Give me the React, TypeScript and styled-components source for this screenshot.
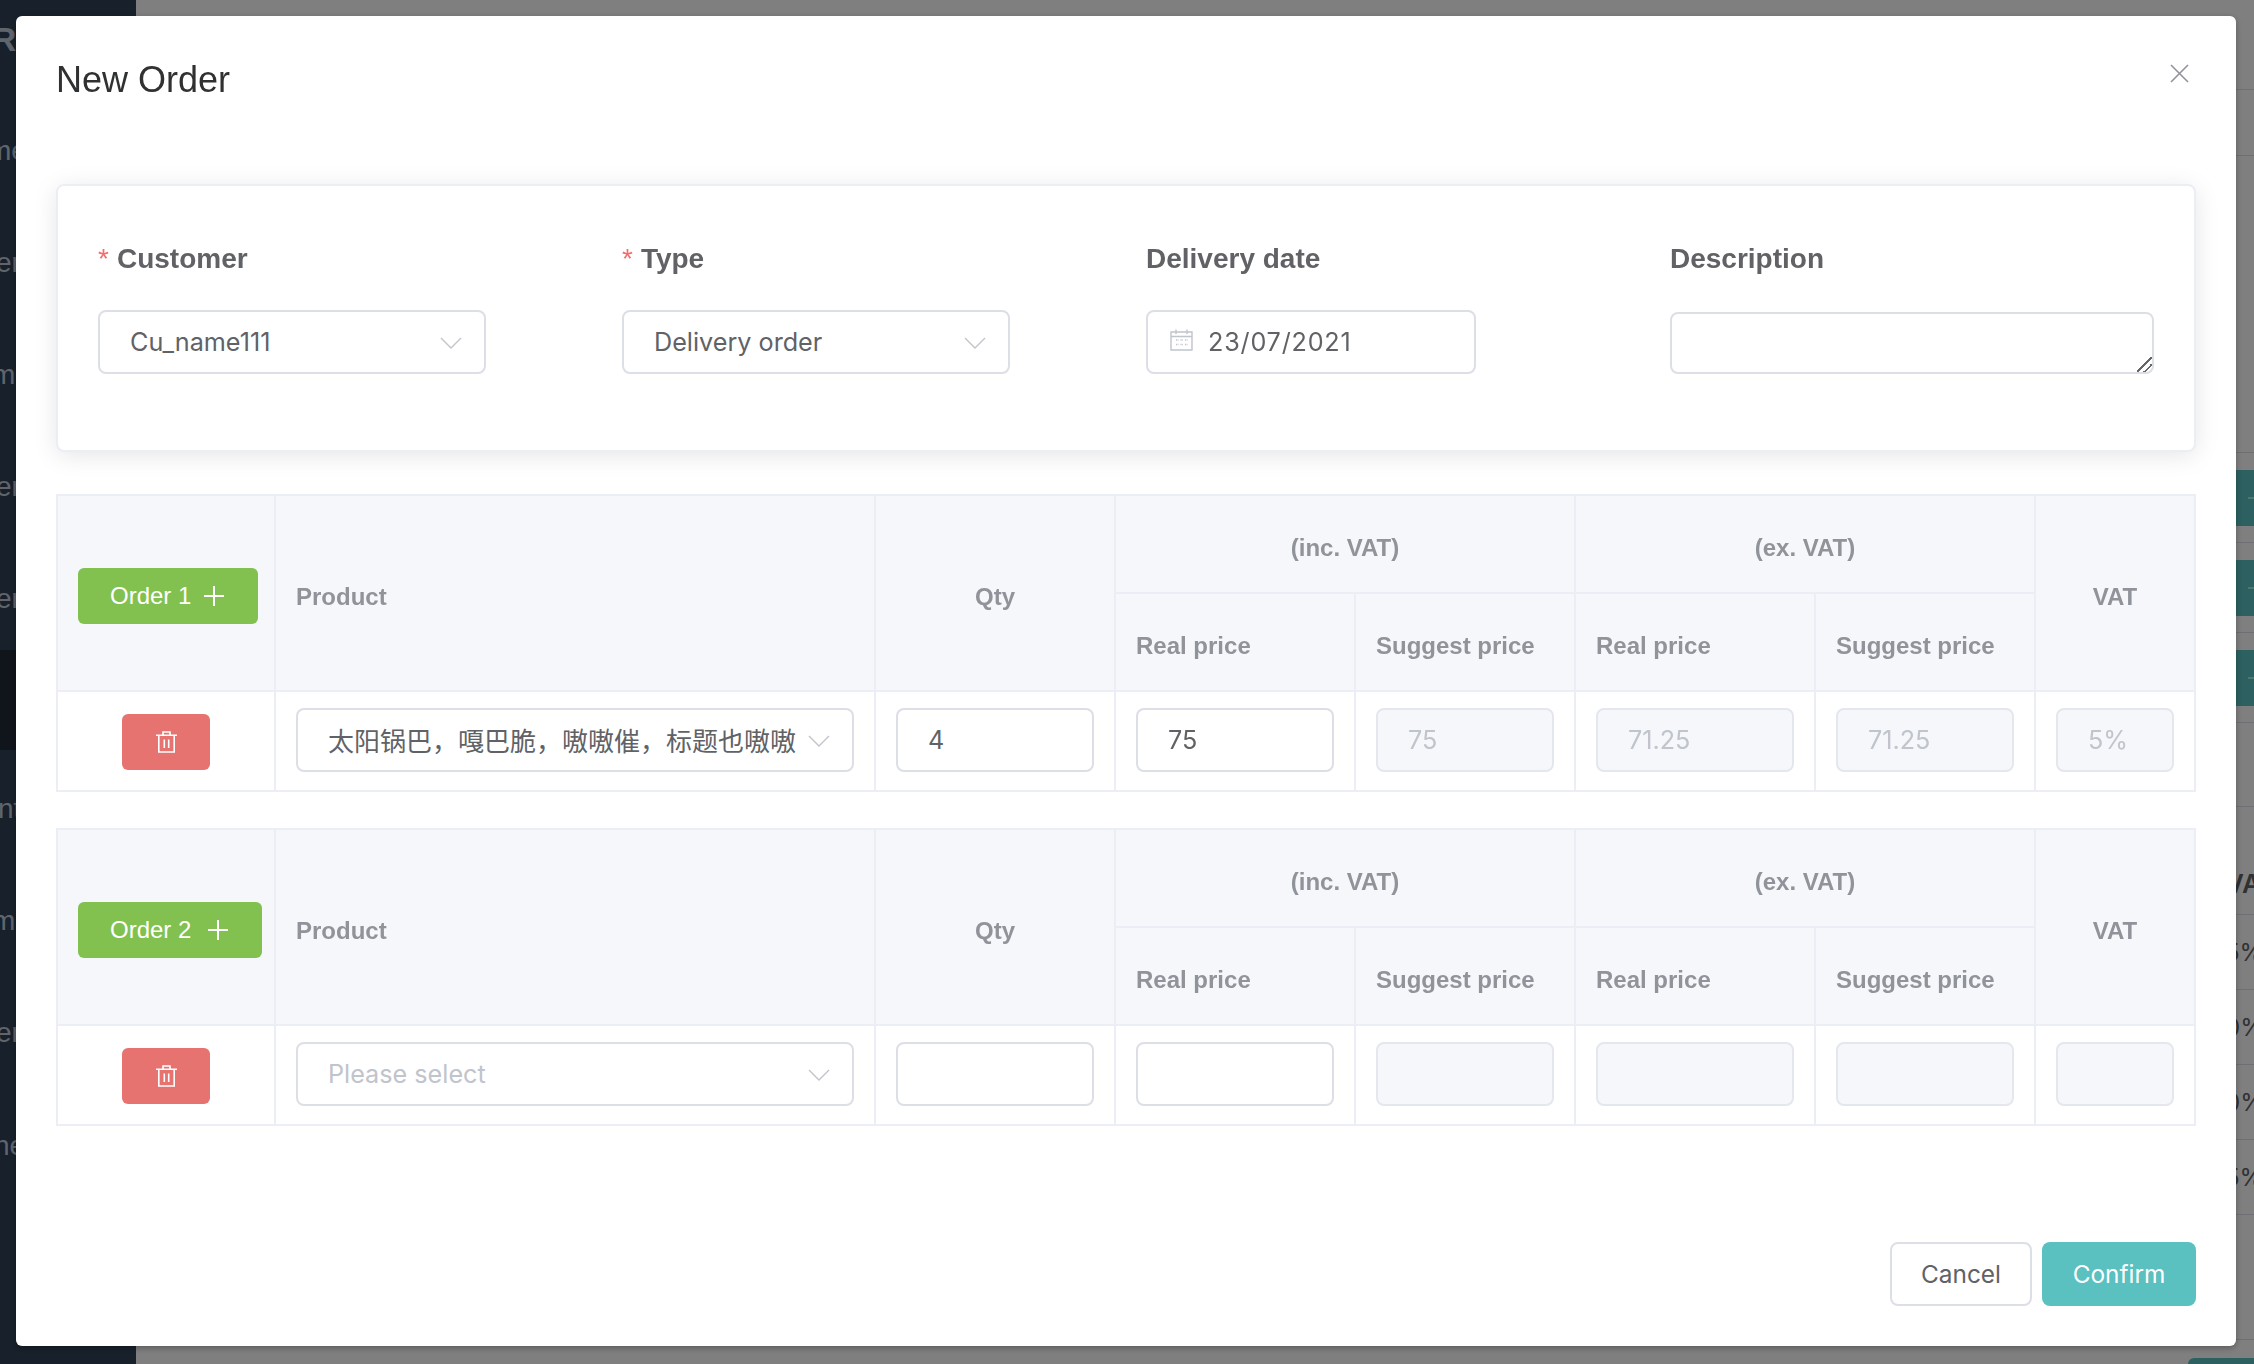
import React from "react";
import styled, { createGlobalStyle } from "styled-components";

const Global = createGlobalStyle`
  html, body { margin: 0; padding: 0; height: 100%; overflow: hidden; background: #fff; }
  * { box-sizing: border-box; }
  #root { height: 100%; }
`;

const SANS = `"Liberation Sans", Arial, "Noto Sans CJK SC", sans-serif`;
const UI = `Inter, "Noto Sans CJK SC", sans-serif`;

/* ---------- page behind the dialog ---------- */
const Page = styled.div`
  display: flex;
  width: 2254px;
  height: 1364px;
  overflow: hidden;
  font-family: ${SANS};
`;
const Sidebar = styled.aside`
  flex: 0 0 136px;
  background: #304156;
  color: #bfcbd9;
  padding-top: 20px;
  overflow: hidden;
`;
const Brand = styled.div`
  height: 75px;
  margin-left: -31px;
  font-size: 34px;
  font-weight: 700;
  line-height: 38px;
  white-space: nowrap;
`;
const MenuItem = styled.div<{ $active?: boolean; $h: number; $pt?: number }>`
  height: ${(p) => p.$h}px;
  padding-top: ${(p) => p.$pt ?? 0}px;
  display: flex;
  align-items: center;
  font-size: 28px;
  white-space: nowrap;
  background: ${(p) => (p.$active ? "#212936" : "transparent")};
`;
const MenuLabel = styled.span<{ $shift: number }>`
  margin-left: ${(p) => p.$shift}px;
`;
const Main = styled.main`
  flex: 1;
  display: flex;
  flex-direction: column;
  background: #fff;
  color: #606266;
`;
const BackRow = styled.div<{ $h: number; $line?: boolean }>`
  flex: 0 0 ${(p) => p.$h}px;
  display: flex;
  align-items: center;
  justify-content: flex-end;
  border-bottom: ${(p) => (p.$line ? "1px solid #dcdfe6" : "0")};
`;
const ActionChip = styled.div`
  width: 120px;
  height: 56px;
  margin-right: -60px;
  border-radius: 6px;
  background: #5ac0c0;
  display: flex;
  align-items: center;
  padding-left: 40px;
`;
const ActionMark = styled.span`
  display: block;
  width: 10px;
  height: 2px;
  margin-left: 14px;
  background: #bfe;
  opacity: 0.7;
`;
const BackCell = styled.div<{ $bold?: boolean }>`
  width: 29px;
  font-size: ${(p) => (p.$bold ? 26 : 24)}px;
  font-weight: ${(p) => (p.$bold ? 600 : 400)};
  white-space: nowrap;
  font-family: ${UI};
`;
const BottomChip = styled.div`
  align-self: flex-end;
  width: 66px;
  height: 6px;
  border-radius: 6px 0 0 0;
  background: #5ac0c0;
`;

const Mask = styled.div`
  position: fixed;
  inset: 0;
  background: rgba(0, 0, 0, 0.5);
`;

/* ---------- dialog ---------- */
const Modal = styled.div`
  position: fixed;
  left: 16px;
  top: 16px;
  width: 2220px;
  height: 1330px;
  padding: 40px;
  display: flex;
  flex-direction: column;
  background: #fff;
  border-radius: 6px;
  box-shadow: 0 2px 6px rgba(0, 0, 0, 0.3);
  font-family: ${SANS};
`;
const ModalHeader = styled.header`
  display: flex;
  justify-content: space-between;
  align-items: flex-start;
  height: 128px;
`;
const Title = styled.h2`
  margin: 0;
  padding-top: 1px;
  font-size: 36px;
  font-weight: 400;
  line-height: 46px;
  color: #303133;
`;
const CloseButton = styled.button`
  margin: 8px 7px 0 0;
  padding: 0;
  width: 19px;
  height: 19px;
  border: 0;
  background: none;
  color: #909399;
  display: block;
`;

const Card = styled.section`
  height: 268px;
  padding: 0 40px 0 40px;
  display: grid;
  grid-template-columns: 524px 524px 524px 1fr;
  align-content: start;
  background: #fff;
  border: 2px solid #ebeef5;
  border-radius: 8px;
  box-shadow: 0 4px 24px rgba(0, 0, 0, 0.1);
`;
const Field = styled.div`
  display: flex;
  flex-direction: column;
  padding-top: 54px;
`;
const Label = styled.label`
  display: block;
  height: 70px;
  padding-top: 1px;
  font-size: 28px;
  font-weight: 700;
  line-height: 36px;
  color: #606266;
`;
const Star = styled.span`
  color: #f56c6c;
  font-weight: 400;
  margin-right: 8px;
`;

const Control = styled.div<{ $w?: number; $disabled?: boolean }>`
  position: relative;
  width: ${(p) => (p.$w ? `${p.$w}px` : "100%")};
  height: 64px;
  display: flex;
  align-items: center;
  padding: 0 30px;
  border: 2px solid ${(p) => (p.$disabled ? "#e4e7ed" : "#dcdfe6")};
  border-radius: 8px;
  background: ${(p) => (p.$disabled ? "#f5f7fa" : "#fff")};
  color: ${(p) => (p.$disabled ? "#c0c4cc" : "#606266")};
  font-family: ${UI};
  font-size: 25.2px;
  white-space: nowrap;
`;
const Placeholder = styled.span`
  color: #c0c4cc;
`;
const ChineseValue = styled.span`
  font-size: 26px;
  margin-top: -2px;
`;
const Chevron = styled.svg`
  position: absolute;
  right: 22px;
  top: 25px;
  width: 22px;
  height: 12px;
  color: #c0c4cc;
`;
const DateControl = styled(Control)`
  padding-left: 22px;
  gap: 15px;
`;
const DateValue = styled.span`
  letter-spacing: 0.8px;
`;
const CalendarIcon = styled.svg`
  flex: 0 0 23px;
  width: 23px;
  height: 22px;
  margin-top: -4px;
  color: #c0c4cc;
`;
const Textarea = styled.textarea`
  display: block;
  width: 100%;
  height: 62px;
  margin-top: 2px;
  padding: 10px 30px;
  border: 2px solid #dcdfe6;
  border-radius: 8px;
  background: #fff;
  font-family: ${UI};
  font-size: 25px;
  color: #606266;
  outline: none;
  resize: vertical;
  &::-webkit-resizer {
    background: linear-gradient(
      135deg,
      transparent 46%,
      #666 46% 54%,
      transparent 54% 70%,
      #666 70% 78%,
      transparent 78%
    );
  }
`;

const OrderTable = styled.table`
  width: 2138px;
  margin-top: 42px;
  table-layout: fixed;
  border-collapse: collapse;
  & + & {
    margin-top: 36px;
  }
`;
const HeadRow = styled.tr`
  height: 98px;
`;
const BodyRow = styled.tr`
  height: 100px;
`;
const Th = styled.th<{ $center?: boolean }>`
  padding: 8px 20px 0;
  border: 2px solid #ebeef5;
  background: #f5f7fa;
  color: #909399;
  font-size: 24px;
  font-weight: 700;
  text-align: ${(p) => (p.$center ? "center" : "left")};
  white-space: nowrap;
`;
const Td = styled.td<{ $center?: boolean }>`
  padding: 0 20px 2px;
  border: 2px solid #ebeef5;
  background: #fff;
  text-align: ${(p) => (p.$center ? "center" : "left")};
`;
const AddButton = styled.button<{ $w: number }>`
  width: ${(p) => p.$w}px;
  height: 56px;
  padding: 0 34px 0 32px;
  margin-top: -2px;
  display: flex;
  align-items: center;
  justify-content: space-between;
  border: 0;
  border-radius: 6px;
  background: #82c150;
  color: #fff;
  font-family: ${SANS};
  font-size: 24px;
`;
const DeleteButton = styled.button`
  width: 88px;
  height: 56px;
  margin-top: 4px;
  padding: 0;
  border: 0;
  border-radius: 6px;
  background: #e6736f;
  color: #fff;
  display: inline-flex;
  align-items: center;
  justify-content: center;
  vertical-align: middle;
`;

const Footer = styled.footer`
  margin-top: auto;
  display: flex;
  justify-content: flex-end;
  gap: 10px;
`;
const FooterButton = styled.button<{ $primary?: boolean }>`
  height: 64px;
  width: ${(p) => (p.$primary ? 154 : 142)}px;
  padding: 0;
  border: ${(p) => (p.$primary ? "0" : "2px solid #dcdfe6")};
  border-radius: 8px;
  background: ${(p) => (p.$primary ? "#5ac0c0" : "#fff")};
  color: ${(p) => (p.$primary ? "#fff" : "#606266")};
  font-family: ${UI};
  font-size: 24.4px;
`;

/* ---------- icons ---------- */
const ChevronDown = () => (
  <Chevron viewBox="0 0 22 12" fill="none" stroke="currentColor" strokeWidth="1.4">
    <path d="M1 1l10 10L21 1" />
  </Chevron>
);
const PlusIcon = () => (
  <svg width="20" height="20" viewBox="0 0 20 20" stroke="currentColor" strokeWidth="2">
    <path d="M10 0v20M0 10h20" />
  </svg>
);
const TrashIcon = () => (
  <svg width="21" height="22" viewBox="0 0 21 22" fill="none" stroke="currentColor" strokeWidth="1.6">
    <path d="M0 4.2h21M7 4V1h7v3M2.8 4.2V21h15.4V4.2M8.3 8.5v8.5M12.7 8.5v8.5" />
  </svg>
);

const Cols = () => (
  <colgroup>
    {[218, 600, 240, 240, 220, 240, 220, 160].map((w, i) => (
      <col key={i} style={{ width: w }} />
    ))}
  </colgroup>
);

type Order = {
  name: string;
  buttonWidth: number;
  product?: string;
  qty?: string;
  real?: string;
  suggest?: string;
  realEx?: string;
  suggestEx?: string;
  vat?: string;
};

const OrderBlock = ({ o }: { o: Order }) => (
  <OrderTable>
    <Cols />
    <thead>
      <HeadRow>
        <Th rowSpan={2}>
          <AddButton $w={o.buttonWidth}>
            {o.name}
            <PlusIcon />
          </AddButton>
        </Th>
        <Th rowSpan={2}>Product</Th>
        <Th rowSpan={2} $center>Qty</Th>
        <Th colSpan={2} $center>(inc. VAT)</Th>
        <Th colSpan={2} $center>(ex. VAT)</Th>
        <Th rowSpan={2} $center>VAT</Th>
      </HeadRow>
      <HeadRow>
        <Th>Real price</Th>
        <Th>Suggest price</Th>
        <Th>Real price</Th>
        <Th>Suggest price</Th>
      </HeadRow>
    </thead>
    <tbody>
      <BodyRow>
        <Td $center>
          <DeleteButton aria-label="Delete">
            <TrashIcon />
          </DeleteButton>
        </Td>
        <Td>
          <Control>
            {o.product ? <ChineseValue>{o.product}</ChineseValue> : <Placeholder>Please select</Placeholder>}
            <ChevronDown />
          </Control>
        </Td>
        <Td><Control>{o.qty}</Control></Td>
        <Td><Control>{o.real}</Control></Td>
        <Td><Control $disabled>{o.suggest}</Control></Td>
        <Td><Control $disabled>{o.realEx}</Control></Td>
        <Td><Control $disabled>{o.suggestEx}</Control></Td>
        <Td><Control $disabled>{o.vat}</Control></Td>
      </BodyRow>
    </tbody>
  </OrderTable>
);

const menu: { label: string; shift: number; h: number; pt?: number; active?: boolean }[] = [
  { label: "me", shift: -12, h: 112 },
  { label: "en", shift: -4, h: 112 },
  { label: "m", shift: -8, h: 112 },
  { label: "er", shift: -4, h: 112 },
  { label: "er", shift: -4, h: 107, pt: 5 },
  { label: "", shift: 0, h: 100, active: true },
  { label: "nt", shift: -2, h: 118 },
  { label: "m", shift: -8, h: 106 },
  { label: "en", shift: -4, h: 118 },
  { label: "ne", shift: -6, h: 108 },
];

export default function App() {
  return (
    <>
      <Global />
      <Page>
        <Sidebar>
          <Brand>ERP</Brand>
          {menu.map((m, i) => (
            <MenuItem key={i} $active={m.active} $h={m.h} $pt={m.pt}>
              <MenuLabel $shift={m.shift}>{m.label}</MenuLabel>
            </MenuItem>
          ))}
        </Sidebar>
        <Main>
          <BackRow $h={90} $line />
          <BackRow $h={66} $line />
          <BackRow $h={297} $line />
          {[0, 1, 2].map((i) => (
            <BackRow key={i} $h={90} $line>
              <ActionChip>
                <ActionMark />
              </ActionChip>
            </BackRow>
          ))}
          <BackRow $h={84} $line />
          <BackRow $h={46} />
          <BackRow $h={62} $line>
            <BackCell $bold>VAT</BackCell>
          </BackRow>
          {["15%", "10%", "10%", "15%"].map((v, i) => (
            <BackRow key={i} $h={75} $line>
              <BackCell>{v.slice(1)}</BackCell>
            </BackRow>
          ))}
          <BackRow $h={42} />
          <BackRow $h={83} $line />
          <BackRow $h={18} />
          <BottomChip />
        </Main>
      </Page>
      <Mask />
      <Modal>
        <ModalHeader>
          <Title>New Order</Title>
          <CloseButton aria-label="Close">
            <svg width="19" height="19" viewBox="0 0 19 19" stroke="currentColor" strokeWidth="1.6">
              <path d="M1 1l17 17M18 1L1 18" />
            </svg>
          </CloseButton>
        </ModalHeader>
        <Card>
          <Field>
            <Label><Star>*</Star>Customer</Label>
            <Control $w={388}>Cu_name111<ChevronDown /></Control>
          </Field>
          <Field>
            <Label><Star>*</Star>Type</Label>
            <Control $w={388}>Delivery order<ChevronDown /></Control>
          </Field>
          <Field>
            <Label>Delivery date</Label>
            <DateControl $w={330}>
              <CalendarIcon viewBox="0 0 23 22" fill="none" stroke="currentColor" strokeWidth="1.4">
                <path d="M1 3h21v18H1zM1 7.5h21M6 0.5v4.5M17 0.5v4.5" />
                <path d="M6 11h2.5M10.5 11h2.5M15 11h2.5M6 15.5h2.5M10.5 15.5h2.5M15 15.5h2.5" strokeDasharray="1.2 0.6" />
              </CalendarIcon>
              <DateValue>23/07/2021</DateValue>
            </DateControl>
          </Field>
          <Field>
            <Label>Description</Label>
            <Textarea />
          </Field>
        </Card>
        <OrderBlock
          o={{
            name: "Order 1",
            buttonWidth: 180,
            product: "太阳锅巴，嘎巴脆，嗷嗷催，标题也嗷嗷",
            qty: "4",
            real: "75",
            suggest: "75",
            realEx: "71.25",
            suggestEx: "71.25",
            vat: "5%",
          }}
        />
        <OrderBlock o={{ name: "Order 2", buttonWidth: 184 }} />
        <Footer>
          <FooterButton>Cancel</FooterButton>
          <FooterButton $primary>Confirm</FooterButton>
        </Footer>
      </Modal>
    </>
  );
}
